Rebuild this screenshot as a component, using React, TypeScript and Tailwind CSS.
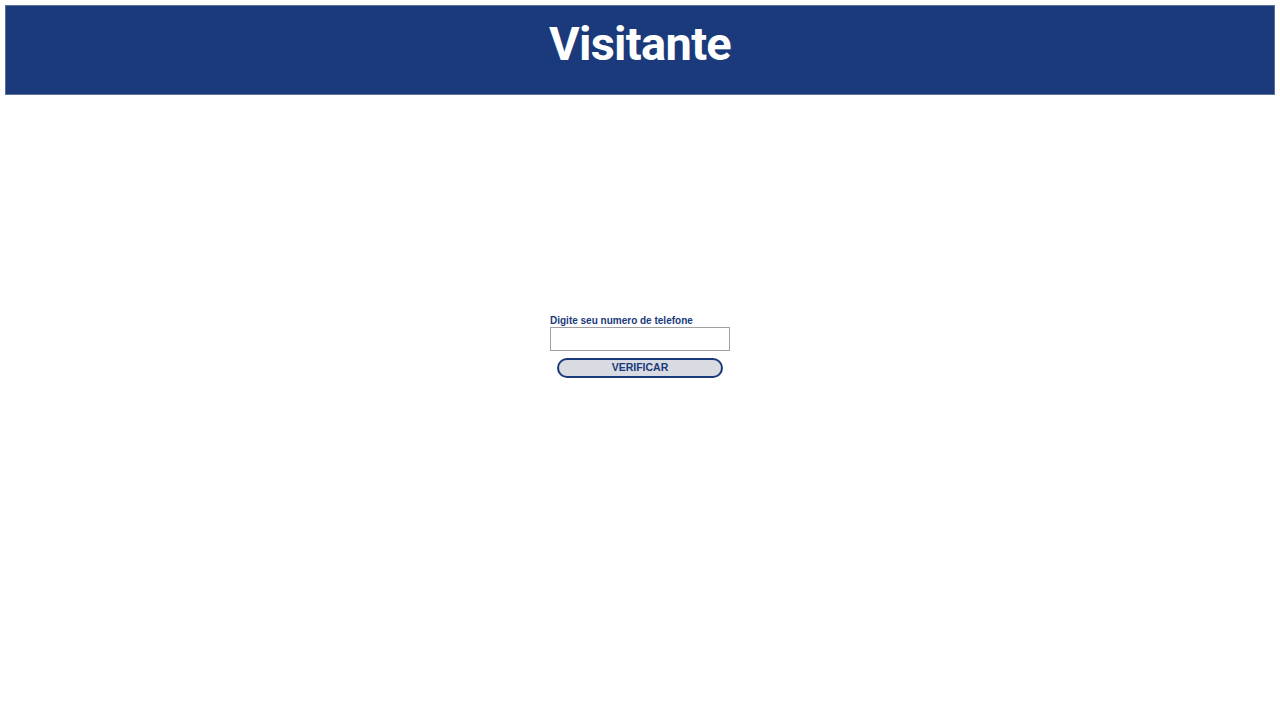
export default function App() {
  return (
    <div className="w-[1280px] h-[727px] bg-white p-[5px]" style={{ fontFamily: "Roboto, 'Liberation Sans', sans-serif" }}>
      <header className="h-[90px] bg-[#1a3a7b] border border-[#5b6f9a] flex justify-center">
        <h1 className="text-white font-bold text-[47px] tracking-[-0.7px] leading-none mt-[14px]">Visitante</h1>
      </header>
      <div className="flex justify-center mt-[219px]" style={{ fontFamily: "'Liberation Sans', Arial, sans-serif" }}>
        <div className="w-[180px] flex flex-col">
          <label className="text-[10px] font-bold text-[#1a3a7b] leading-[12px] mt-[1px]">Digite seu numero de telefone</label>
          <input type="text" className="h-[24px] w-[180px] border border-[#a0a0a0] bg-white outline-none" />
          <button className="mt-[7px] mx-auto w-[166px] h-[20px] pb-[1px] rounded-full border-2 border-[#1a3a7b] bg-[#d8dbe2] text-[10.5px] font-bold text-[#1a3a7b] leading-none">VERIFICAR</button>
        </div>
      </div>
    </div>
  );
}
